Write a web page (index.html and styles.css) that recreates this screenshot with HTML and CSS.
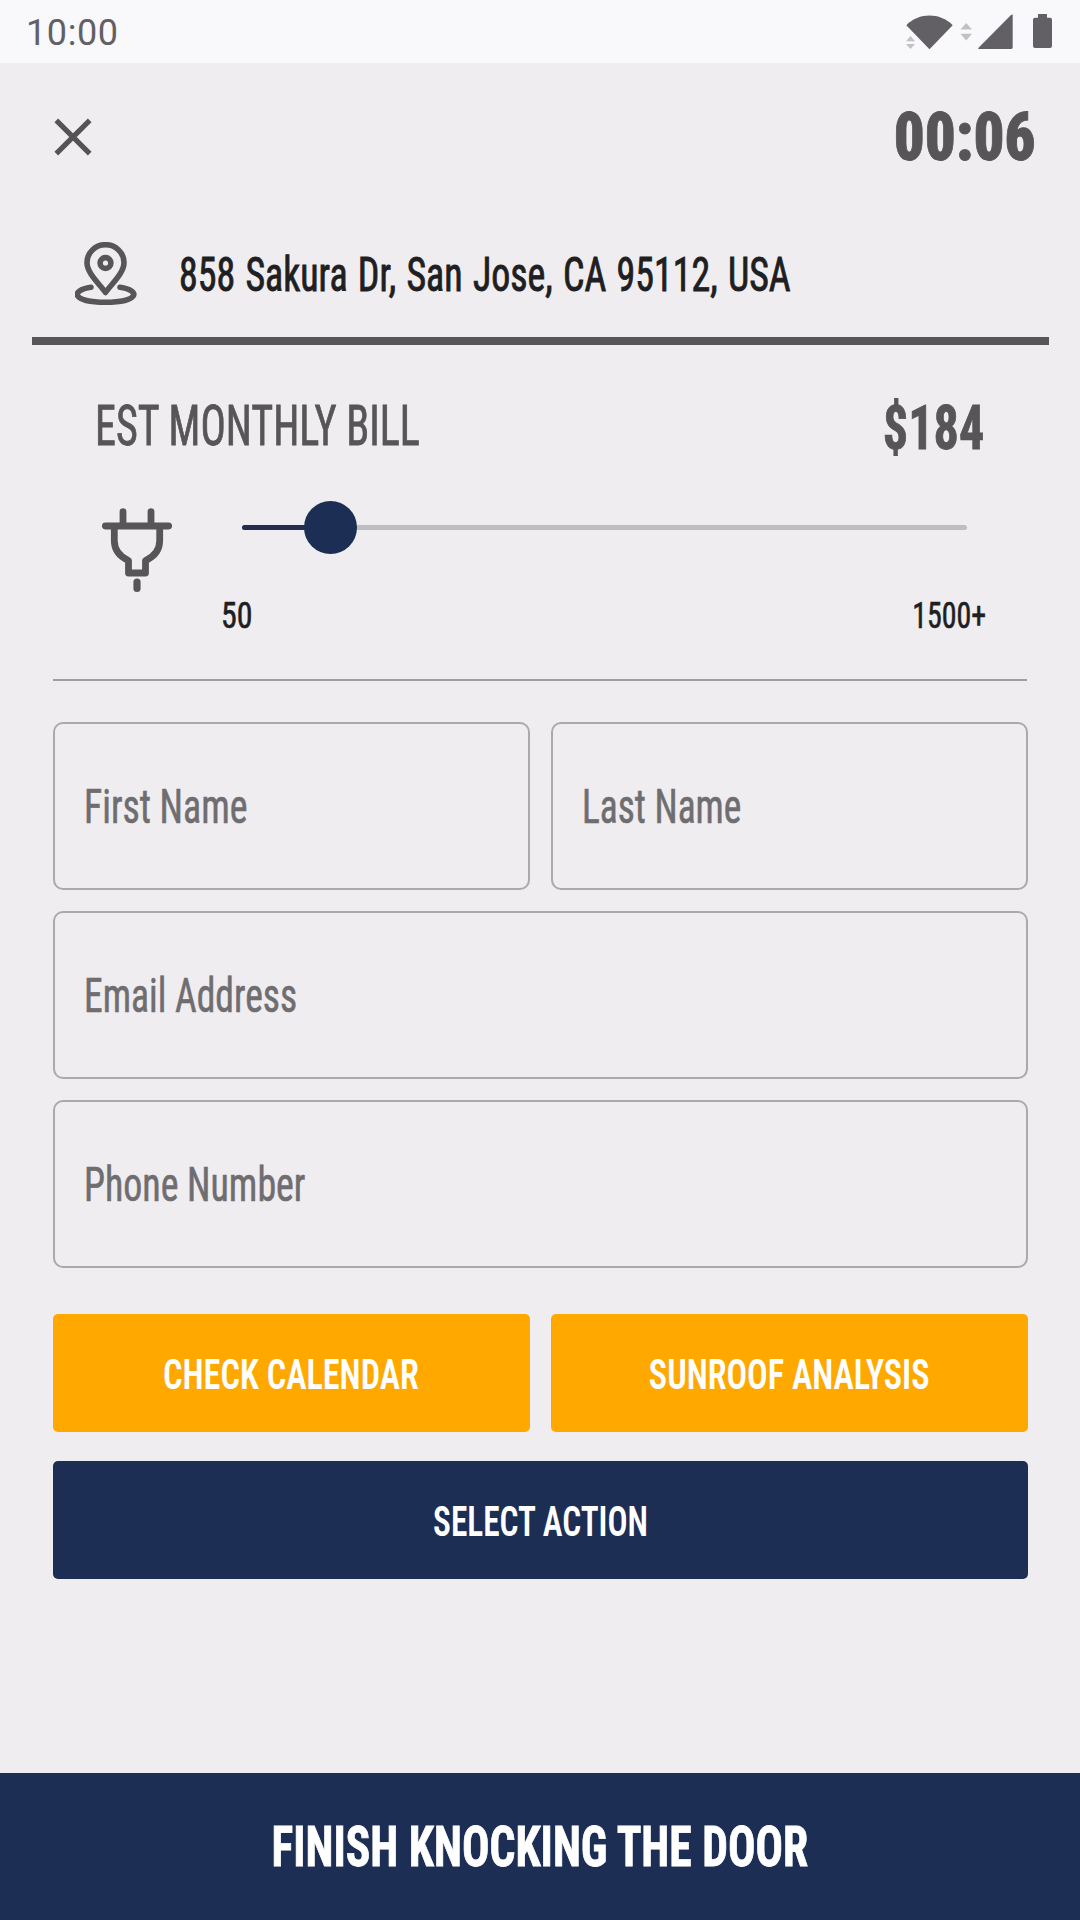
FILE: index.html
```html
<!DOCTYPE html>
<html lang="en">
<head>
<meta charset="utf-8">
<title>Door Knock</title>
<link rel="stylesheet" href="styles.css">
</head>
<body>
<div class="screen">
  <header class="status">
    <span class="clock">10:00</span>
    <svg class="status-icons" viewBox="900 10 160 44" width="160" height="44">
      <g fill="#626064">
        <path d="M929.5 49.3 906.3 25.2C919 12.4 940 12.4 952.7 25.2Z"/>
        <path d="M1012.7 15.6V47.6Q1012.7 49 1011.3 49H979.5Q977.3 49 978.8 47.4L1011 15Q1012.7 13.6 1012.7 15.6Z"/>
        <path d="M1038 14h9v3.7h3q2 0 2 2V46q0 2-2 2h-15q-2 0-2-2V19.700q0-2 2-2h3Z"/>
      </g>
      <g fill="#c2c0c3">
        <path d="M906 41.200h9L910.500 36ZM906 44h9l-4.500 5Z"/>
        <path d="M960.500 29.500h11.500L966.200 23ZM960.500 33.700h11.500L966.200 40.500Z"/>
      </g>
    </svg>
  </header>

  <div class="topbar">
    <svg class="close" viewBox="0 0 38 38" width="38" height="38"><path d="M2.300 2.300 35.700 35.700M35.700 2.300 2.300 35.700" stroke="#555356" stroke-width="5.200"/></svg>
    <span class="timer">00:06</span>
  </div>

  <div class="address">
    <svg class="pin" viewBox="0 0 62 64" width="62" height="64" fill="none" stroke="#575558" stroke-width="5.600" stroke-linecap="round" stroke-linejoin="round">
      <path d="M30.500 50.500C25 42.500 12 31.500 12 20.500A18.500 17.800 0 0 1 49 20.500C49 31.500 36 42.500 30.500 50.500Z"/>
      <circle cx="30.500" cy="21" r="5.400"/>
      <path d="M16 45.200C-5.500 48.500-2.500 60.300 30.500 60.300S66.500 48.500 45 45.200"/>
    </svg>
    <span class="address-text">858 Sakura Dr, San Jose, CA 95112, USA</span>
  </div>

  <section class="bill">
    <div class="bill-head">
      <span class="bill-title">EST MONTHLY BILL</span>
      <span class="bill-value">$184</span>
    </div>
    <div class="bill-body">
      <svg class="plug" viewBox="0 0 70 85" width="70" height="85" fill="none" stroke="#575558" stroke-width="6.800" stroke-linecap="round" stroke-linejoin="round">
        <path d="M3.300 18H66.700M21 17V3.600M49 17V3.600"/>
        <path d="M12.300 19V32.500C12.300 42 17.500 48.500 26.500 52.500V65H43.500V52.500C52.500 48.500 57.700 42 57.700 32.500V19"/>
        <path d="M35 74V80.500" stroke-width="7.200"/>
      </svg>
      <div class="range">
        <div class="track"><div class="fill"></div><div class="knob"></div></div>
        <div class="limits"><span class="min">50</span><span class="max">1500+</span></div>
      </div>
    </div>
  </section>

  <main class="form">
    <div class="pair">
      <div class="field"><span class="hint first">First Name</span></div>
      <div class="field"><span class="hint last">Last Name</span></div>
    </div>
    <div class="field"><span class="hint">Email Address</span></div>
    <div class="field"><span class="hint phone">Phone Number</span></div>
    <div class="pair actions">
      <div class="button gold"><span class="label">CHECK CALENDAR</span></div>
      <div class="button gold"><span class="label">SUNROOF ANALYSIS</span></div>
    </div>
    <div class="button navy"><span class="label select">SELECT ACTION</span></div>
  </main>

  <footer class="finish"><span class="finish-label">FINISH KNOCKING THE DOOR</span></footer>
</div>
</body>
</html>
```

FILE: styles.css
```css
* { box-sizing: border-box; }

body {
  margin: 0;
  background: #efedf0;
  font-family: "Roboto Condensed", Roboto, sans-serif;
  font-stretch: 75%;
  color: #575558;
}

span { display: inline-block; white-space: nowrap; }
svg { display: block; flex: none; }

.screen {
  width: 1080px;
  height: 1920px;
  display: flex;
  flex-direction: column;
}

.status {
  height: 63px;
  flex: none;
  display: flex;
  justify-content: space-between;
  padding: 10px 20px 0 26px;
  background: #f9f8fb;
}
.clock {
  font: 400 36px/47px Roboto, sans-serif;
  font-stretch: 100%;
  color: #626064;
  letter-spacing: .6px;
}

.topbar {
  height: 147px;
  display: flex;
  align-items: center;
  justify-content: space-between;
  padding: 0 44px 0 54px;
}
.timer {
  font-size: 67px;
  font-weight: 900;
  transform: scaleX(.905);
  transform-origin: right;
  -webkit-text-stroke: .8px;
}

.address {
  height: 135px;
  margin: 0 31px 0 32px;
  padding: 0 0 0 43px;
  border-bottom: 8px solid #575558;
  display: flex;
  align-items: center;
  gap: 42px;
}
.address-text {
  font-size: 48.500px;
  word-spacing: 2px;
  color: #201e21;
  transform: translateY(1px) scaleX(.7815);
  transform-origin: left;
  -webkit-text-stroke: .9px;
}

.bill {
  height: 336px;
  margin: 0 53px 41px;
  padding: 41px 42px 0;
  border-bottom: 2px solid #a09ea1;
}
.bill-head {
  height: 80px;
  display: flex;
  align-items: center;
  justify-content: space-between;
}
.bill-title {
  font-size: 55px;
  transform: scaleX(.766);
  transform-origin: left;
  -webkit-text-stroke: .8px;
}
.bill-value {
  font-size: 60.500px;
  font-weight: 700;
  transform: translate(-1px, 2px) scaleX(.83);
  transform-origin: right;
  -webkit-text-stroke: .8px;
}
.bill-body {
  display: flex;
  align-items: flex-start;
  gap: 49px;
  padding: 42px 2px 0 7px;
}
.range { flex: 1; padding-top: 17px; }
.track {
  position: relative;
  height: 5px;
  margin: 0 16px 0 21px;
  border-radius: 3px;
  background: #bdbec0;
}
.fill {
  width: 89px;
  height: 100%;
  border-radius: 3px 0 0 3px;
  background: #272b52;
}
.knob {
  position: absolute;
  left: 62px;
  top: -24px;
  width: 53px;
  height: 53px;
  border-radius: 50%;
  background: #1c2e54;
}
.limits {
  display: flex;
  justify-content: space-between;
  margin-top: 66px;
  line-height: 40px;
  font-size: 36px;
  color: #201e21;
  -webkit-text-stroke: .6px;
}
.min { transform: scaleX(.885); transform-origin: left; }
.max { transform: translateX(3px) scaleX(.83); transform-origin: right; }

.form {
  flex: 1;
  display: flex;
  flex-direction: column;
  gap: 21px;
  padding: 0 52.500px;
}
.pair { display: grid; grid-template-columns: 1fr 1fr; gap: 21px; }
.field {
  height: 168px;
  border: 2px solid #aba9ac;
  border-radius: 10px;
  padding-left: 29px;
  display: flex;
  align-items: center;
}
.hint {
  font-size: 49px;
  color: #6f6d70;
  transform: scaleX(.768);
  transform-origin: left;
  -webkit-text-stroke: .6px;
}
.first { transform: scaleX(.773); }
.last { transform: scaleX(.764); }
.phone { transform: scaleX(.773); }

.actions { margin: 25px 0 8px; }
.button {
  height: 118px;
  border-radius: 5px;
  display: flex;
  align-items: center;
  justify-content: center;
  padding-top: 3px;
  color: #fff;
}
.gold { background: #ffa800; }
.navy { background: #1c2e54; }
.label {
  font-size: 42px;
  font-weight: 600;
  transform: scaleX(.815);
}
.select { transform: scaleX(.7928); }

.finish {
  height: 147px;
  flex: none;
  display: flex;
  align-items: center;
  justify-content: center;
  background: #1c2e54;
  color: #fff;
}
.finish-label {
  font-size: 55px;
  font-weight: 700;
  transform: scaleX(.8284);
  -webkit-text-stroke: .8px;
}
```
